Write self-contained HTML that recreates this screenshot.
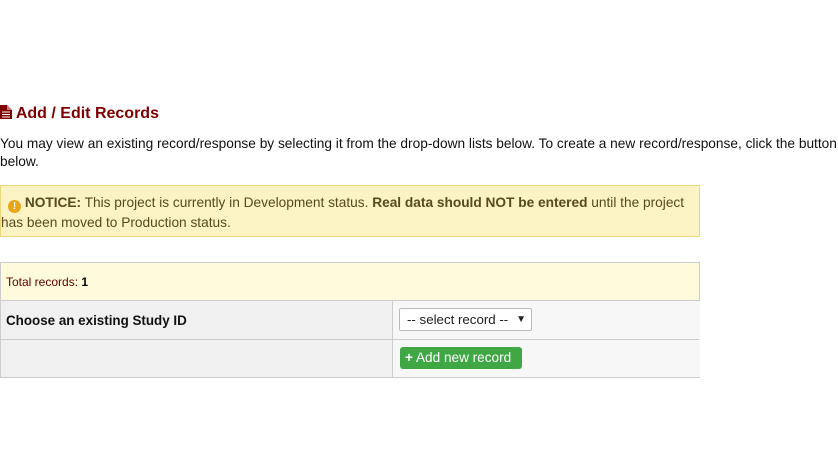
<!DOCTYPE html>
<html><head><style>
body{margin:0;width:838px;height:471px;background:#fff;font-family:"Liberation Sans",sans-serif;color:#000;position:relative;overflow:hidden}
.a{position:absolute;white-space:nowrap}
</style></head><body>
<div class="a" style="left:0;top:104px;font-size:16px;font-weight:bold;color:#800000">
<svg width="12" height="15" viewBox="0 0 12 15" style="vertical-align:-1px"><path d="M0 1h7l5 5v9H0z" fill="#800000"/><path d="M7 1v5h5" fill="#c77"/><path d="M2 8h8M2 10.5h8M2 13h8" stroke="#fff" stroke-width="1"/></svg> Add / Edit Records</div>
<div class="a" style="left:0;top:135px;font-size:13.7px;line-height:18px;color:#111">You may view an existing record/response by selecting it from the drop-down lists below. To create a new record/response, click the button<br>below.</div>
<div class="a" style="left:0;top:185px;width:698px;height:50px;background:#fcf3c5;border:1px solid #ecd87a"></div>
<div class="a" style="left:1px;top:193px;font-size:13.7px;line-height:19px;color:#554a20"><span style="margin-left:7px;display:inline-block;width:13px;height:13px;border-radius:50%;background:#e8a517;color:#fff;font-size:10px;text-align:center;line-height:13px;font-weight:bold;vertical-align:-2px">!</span> <b>NOTICE:</b> This project is currently in Development status. <b>Real data should NOT be entered</b> until the project<br>has been moved to Production status.</div>
<div class="a" style="left:0;top:262px;width:698px;height:114px;border:1px solid #ccc;background:#f0f0f0"></div>
<div class="a" style="left:1px;top:263px;width:698px;height:37px;background:#fdfbdc;border-bottom:1px solid #ccc"></div>
<div class="a" style="left:392px;top:301px;width:307px;height:76px;border-left:1px solid #ccc;background:#f7f7f7"></div>
<div class="a" style="left:1px;top:339px;width:698px;border-top:1px solid #ccc"></div>
<div class="a" style="left:6px;top:275px;font-size:12px;color:#600">Total records: <b style="color:#000">1</b></div>
<div class="a" style="left:6px;top:313px;font-size:13.4px;font-weight:bold;color:#111">Choose an existing Study ID</div>
<div class="a" style="left:399px;top:308px;width:133px;height:23px;border:1px solid #bbb;border-radius:2px;background:#fff;font-size:13.3px;line-height:22px;color:#222;padding-left:7px;box-sizing:border-box">-- select record --<span style="position:absolute;right:5px;top:0;font-size:10px">&#9660;</span></div>
<div class="a" style="left:400px;top:347px;width:122px;height:22px;background:#3fa845;border-radius:3px;color:#fff;font-size:13.6px;line-height:22px;text-indent:5px"><b>+</b> Add new record</div>
</body></html>
